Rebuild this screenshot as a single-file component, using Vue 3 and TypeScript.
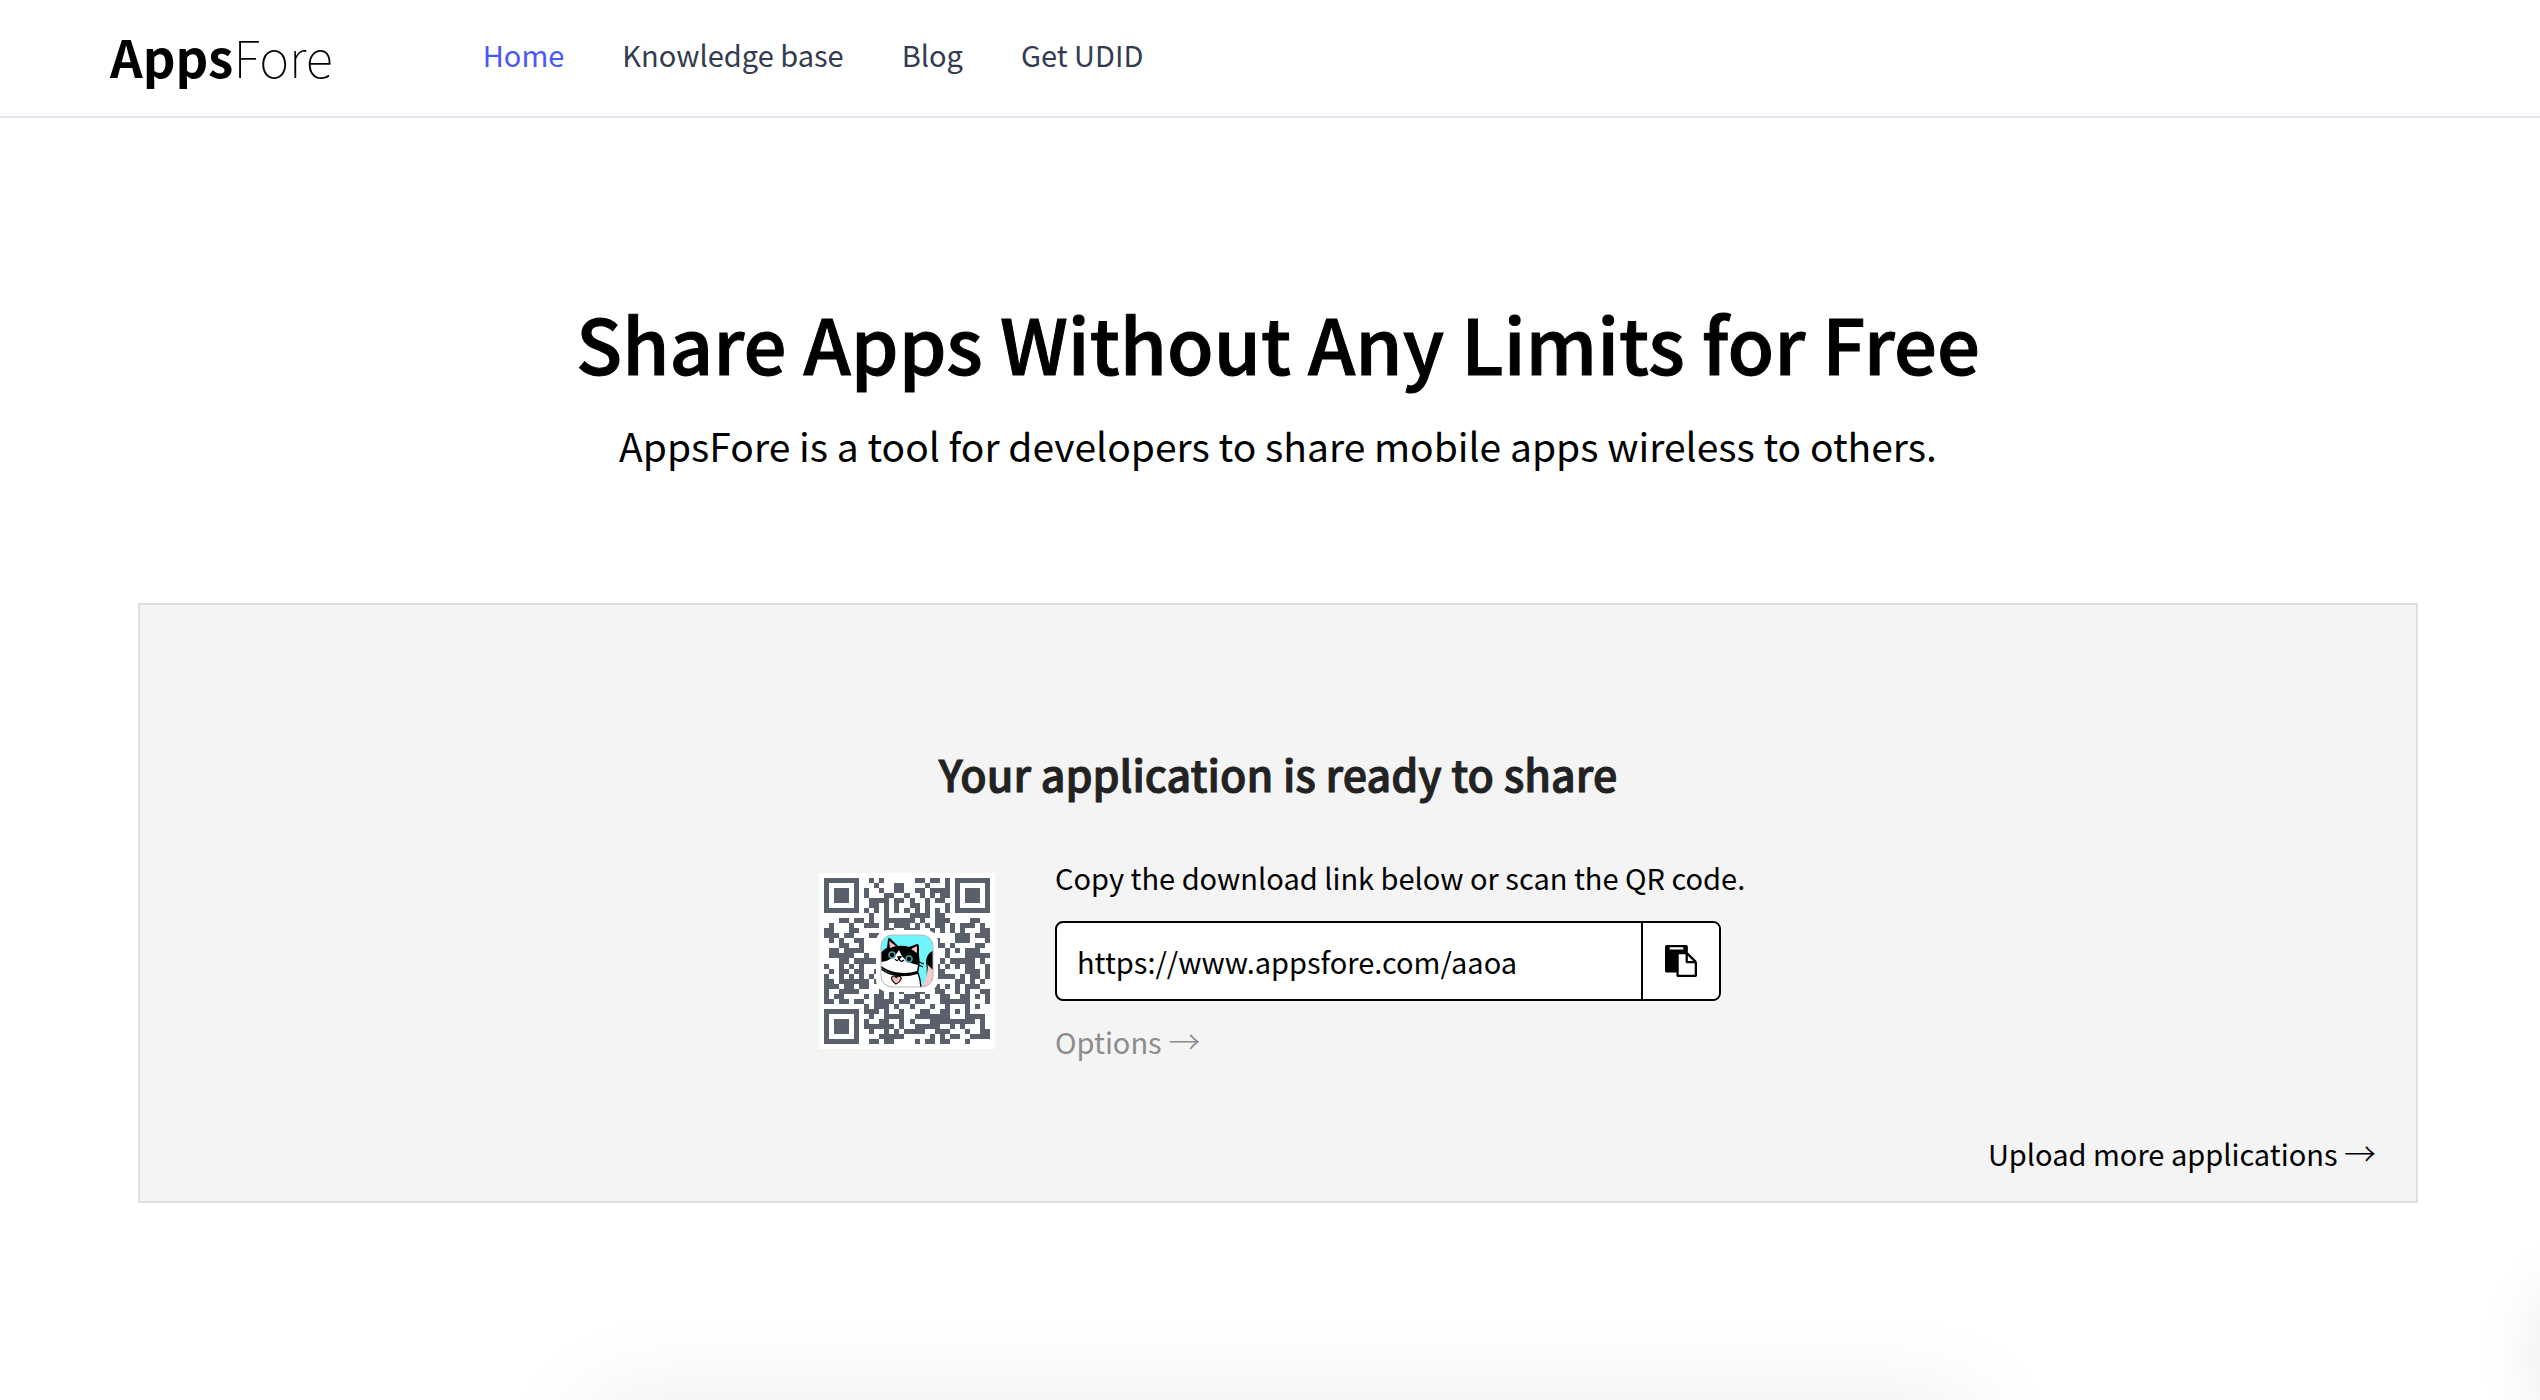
<script setup lang="ts">
import { ref } from 'vue'

const links = ['Home', 'Knowledge base', 'Blog', 'Get UDID']
const url = ref('https://www.appsfore.com/aaoa')

function copy() {
  navigator.clipboard?.writeText(url.value)
}

/* QR code, version 4, error correction H, byte mode, mask 6 */
const SIZE = 33
const MASK = 6

function encode(text: string): boolean[][] {
  const exp: number[] = []
  const log: number[] = []
  for (let i = 0, x = 1; i < 255; i++) {
    exp[i] = x
    log[x] = i
    x <<= 1
    if (x > 255) x ^= 0x11d
  }
  const mul = (a: number, b: number) => (a && b ? exp[(log[a] + log[b]) % 255] : 0)

  let bits = '0100' + text.length.toString(2).padStart(8, '0')
  for (const c of text) bits += c.charCodeAt(0).toString(2).padStart(8, '0')
  bits += '0000'
  const data: number[] = []
  for (let i = 0; i < bits.length; i += 8) data.push(parseInt(bits.slice(i, i + 8), 2))
  for (let pad = 0xec; data.length < 36; pad ^= 0xec ^ 0x11) data.push(pad)

  let gen = [1]
  for (let i = 0; i < 16; i++) {
    const next = [...gen, 0]
    gen.forEach((g, k) => (next[k + 1] ^= mul(g, exp[i])))
    gen = next
  }
  const blocks = [0, 1, 2, 3].map((b) => data.slice(b * 9, b * 9 + 9))
  const checks = blocks.map((block) => {
    const rem = [...block, ...new Array(16).fill(0)]
    for (let i = 0; i < 9; i++) {
      const f = rem[i]
      gen.forEach((g, k) => (rem[i + k] ^= mul(g, f)))
    }
    return rem.slice(9)
  })
  const words: number[] = []
  for (let i = 0; i < 9; i++) blocks.forEach((b) => words.push(b[i]))
  for (let i = 0; i < 16; i++) checks.forEach((b) => words.push(b[i]))

  const m: boolean[][] = Array.from({ length: SIZE }, () => new Array(SIZE).fill(false))
  const fixed: boolean[][] = Array.from({ length: SIZE }, () => new Array(SIZE).fill(false))
  const set = (r: number, c: number, v: boolean) => {
    if (r < 0 || c < 0 || r >= SIZE || c >= SIZE) return
    m[r][c] = v
    fixed[r][c] = true
  }
  for (let i = 0; i < SIZE; i++) {
    set(6, i, i % 2 === 0)
    set(i, 6, i % 2 === 0)
  }
  for (const [r, c] of [[3, 3], [3, SIZE - 4], [SIZE - 4, 3]]) {
    for (let y = -4; y <= 4; y++)
      for (let x = -4; x <= 4; x++) {
        const d = Math.max(Math.abs(x), Math.abs(y))
        set(r + y, c + x, d !== 2 && d !== 4)
      }
  }
  for (let y = -2; y <= 2; y++)
    for (let x = -2; x <= 2; x++) set(26 + y, 26 + x, Math.max(Math.abs(x), Math.abs(y)) !== 1)

  const format = (2 << 3) | MASK
  let rem = format
  for (let i = 0; i < 10; i++) rem = (rem << 1) ^ ((rem >> 9) * 0x537)
  const f = ((format << 10) | rem) ^ 0x5412
  const bit = (i: number) => ((f >> i) & 1) === 1
  for (let i = 0; i <= 5; i++) set(i, 8, bit(i))
  set(7, 8, bit(6))
  set(8, 8, bit(7))
  set(8, 7, bit(8))
  for (let i = 9; i < 15; i++) set(8, 14 - i, bit(i))
  for (let i = 0; i < 8; i++) set(8, SIZE - 1 - i, bit(i))
  for (let i = 8; i < 15; i++) set(SIZE - 15 + i, 8, bit(i))
  set(SIZE - 8, 8, true)

  let k = 0
  for (let right = SIZE - 1; right >= 1; right -= 2) {
    if (right === 6) right = 5
    for (let v = 0; v < SIZE; v++) {
      for (let j = 0; j < 2; j++) {
        const c = right - j
        const r = ((right + 1) & 2) === 0 ? SIZE - 1 - v : v
        if (fixed[r][c]) continue
        const on = k < words.length * 8 && ((words[k >> 3] >> (7 - (k & 7))) & 1) === 1
        k++
        m[r][c] = on !== ((((r * c) % 2) + ((r * c) % 3)) % 2 === 0)
      }
    }
  }
  return m
}

const qrPath = encode(url.value)
  .map((row, y) => row.map((on, x) => (on ? `M${x} ${y}h1v1h-1z` : '')).join(''))
  .join('')
</script>

<template>
  <div class="page">
    <header class="bar">
      <a class="logo" href="#"><b>Apps</b>Fore</a>
      <nav class="nav">
        <a v-for="(l, i) in links" :key="l" href="#" :class="{ active: i === 0 }">{{ l }}</a>
      </nav>
    </header>

    <main>
      <section class="hero">
        <h1>Share Apps Without Any Limits for Free</h1>
        <p>AppsFore is a tool for developers to share mobile apps wireless to others.</p>
      </section>

      <section class="card">
        <h2>Your application is ready to share</h2>
        <div class="share">
          <div class="qr">
            <svg class="code" viewBox="0 0 33 33" shape-rendering="crispEdges" role="img" aria-label="QR code">
              <path :d="qrPath" fill="#59606b" />
            </svg>
            <svg class="cat" viewBox="0 0 62 62" aria-hidden="true">
              <defs>
                <clipPath id="tile"><rect x="5" y="5" width="52" height="52" rx="11" /></clipPath>
              </defs>
              <rect width="62" height="62" rx="12" fill="#fff" />
              <g clip-path="url(#tile)">
                <rect x="5" y="5" width="52" height="52" fill="#6ff5fb" />
                <path d="M58 21c-6 2-8 8-7 14 1 8-3 15-7 20v5h14z" fill="#f8c9cc" stroke="#000" stroke-width="1.2" />
                <path d="M58 21c-6 2-8 7-7 13l7 7z" fill="#000" />
                <path d="M43 36c-1 7 0 14 2 20 5-4 7-12 5-20z" fill="#6ff5fb" />
                <path d="M3 37c10 10 26 10 39 6 2 5 3 10 3 18H3z" fill="#fff" stroke="#000" stroke-width="1.4" />
                <path d="M4 24C7 20 10 18 11 18L12 9q1-2 3 0l7 7q6-1 11 1l8-3q2 0 2 3v9c1 5 1 10-1 17-12 5-28 3-38-6z" fill="#000" />
                <path d="M13 11l1 7 6-2zM35 19l6-3 0 7z" fill="#f8b9bd" />
                <path d="M4 32c8 0 15-5 19-12 3 8 8 13 19 15l-1 6c-12 4-27 2-37-6z" fill="#fff" />
                <circle cx="16" cy="25" r="3" fill="#000" stroke="#3ea5ab" stroke-width="1.5" />
                <circle cx="33" cy="29" r="3" fill="#000" stroke="#3ea5ab" stroke-width="1.5" />
                <path d="M19 29q2 3 4 0q2 4 5 1M22 27h3l-2 2z" fill="none" stroke="#000" stroke-width="1.3" />
                <path d="M43 32l5 2M43 35l4 2" stroke="#000" stroke-width="1.2" />
                <path d="M20 54c-6-4-5-8-2-8q2 0 2 2 1-2 3-2c4 1 2 6-3 8z" fill="#f8b9bd" stroke="#000" stroke-width="1.2" />
                <path d="M20 43v4" stroke="#000" stroke-width="1.2" />
              </g>
              <rect x="5" y="5" width="52" height="52" rx="11" fill="none" stroke="#b9b9b9" />
            </svg>
          </div>
          <div class="details">
            <label for="link">Copy the download link below or scan the QR code.</label>
            <div class="field">
              <input id="link" v-model="url" type="text" readonly />
              <button type="button" aria-label="Copy link" @click="copy">
                <svg viewBox="0 0 1792 1792" aria-hidden="true">
                  <path
                    d="M768 1664h896v-640h-416q-40 0-68-28t-28-68v-416h-384v1152zm256-1440v-64q0-13-9.5-22.5t-22.5-9.5h-704q-13 0-22.5 9.5t-9.5 22.5v64q0 13 9.5 22.5t22.5 9.5h704q13 0 22.5-9.5t9.5-22.5zm256 672h299l-299-299v299zm512 128v672q0 40-28 68t-68 28h-960q-40 0-68-28t-28-68v-160h-544q-40 0-68-28t-28-68v-1344q0-40 28-68t68-28h1088q40 0 68 28t28 68v328q21 13 36 28l408 408q28 28 48 76t20 88z"
                  />
                </svg>
              </button>
            </div>
            <a class="options" href="#">Options <span class="arrow">→</span></a>
          </div>
        </div>
        <a class="more" href="#">Upload more applications <span class="arrow">→</span></a>
      </section>
    </main>

    <div class="glow glow-bottom"></div>
    <div class="glow glow-side"></div>
  </div>
</template>

<style>
body {
  margin: 0;
  background: #fff;
}
</style>

<style scoped>
.page {
  position: relative;
  box-sizing: border-box;
  min-height: 100vh;
  overflow: hidden;
  background: #fff;
  color: #000;
  font-family: 'Noto Sans CJK SC', 'Noto Sans', sans-serif;
  font-size: 29px;
  line-height: 40px;
}
a {
  color: inherit;
  text-decoration: none;
}
.bar {
  display: flex;
  align-items: center;
  height: 112px;
  padding: 0 110px 4px;
  border-bottom: 2px solid #e2e4ef;
}
.logo {
  margin-right: 150px;
  font-size: 51px;
  font-weight: 100;
  line-height: 72px;
}
.logo b {
  font-weight: 700;
}
.nav {
  display: flex;
  gap: 58px;
  padding-bottom: 4px;
  color: #333b52;
}
.nav .active {
  color: #4a58f8;
}
main {
  padding: 0 122px 0 138px;
}
.hero {
  padding: 174px 0 128px;
  text-align: center;
}
.hero h1 {
  margin: 0 0 23px;
  font-size: 76px;
  font-weight: 500;
  line-height: 100px;
  -webkit-text-stroke: 1px currentColor;
}
.hero p {
  margin: 0;
  font-size: 39px;
  line-height: 60px;
}
.card {
  display: flex;
  flex-direction: column;
  align-items: center;
  padding: 138px 40px 28px;
  border: 2px solid #dfdfdf;
  background: #f4f4f4;
}
.card h2 {
  margin: 0 0 54px;
  color: #222;
  font-size: 43px;
  font-weight: 500;
  line-height: 60px;
  -webkit-text-stroke: 1px currentColor;
}
.share {
  display: flex;
  align-items: flex-start;
  gap: 60px;
}
.qr {
  position: relative;
  display: flex;
  margin-top: 16px;
  padding: 5px;
  background: #fff;
}
.code {
  width: 166px;
  height: 166px;
}
.cat {
  position: absolute;
  top: 57px;
  left: 57px;
  width: 62px;
  height: 62px;
}
.details {
  display: flex;
  flex-direction: column;
  align-items: flex-start;
  width: 682px;
  white-space: nowrap;
}
.field {
  display: flex;
  box-sizing: border-box;
  width: 666px;
  height: 80px;
  margin: 24px 0 20px;
  overflow: hidden;
  border: 2px solid #000;
  border-radius: 8px;
  background: #fff;
}
.field input {
  flex: 1;
  min-width: 0;
  padding: 0 20px;
  border: 0;
  outline: 0;
  background: transparent;
  color: #000;
  font: inherit;
}
.field button {
  display: flex;
  align-items: center;
  justify-content: center;
  width: 78px;
  padding: 0;
  border: 0;
  border-left: 2px solid #000;
  background: #fff;
}
.field svg {
  width: 32px;
  height: 32px;
}
.arrow {
  font-size: 32px;
  font-weight: 300;
  line-height: 1;
}
.options {
  color: #8c8c8c;
}
.more {
  align-self: flex-end;
  margin-top: 72px;
}
.glow {
  position: absolute;
  pointer-events: none;
}
.glow-bottom {
  top: 100%;
  right: 22%;
  left: 23%;
  height: 100px;
  border-radius: 40px;
  box-shadow: 0 0 100px rgba(0, 0, 0, 0.08);
}
.glow-side {
  bottom: -35px;
  left: 100%;
  width: 160px;
  height: 160px;
  border-radius: 50%;
  box-shadow: 0 0 70px rgba(0, 0, 0, 0.1);
}
</style>
